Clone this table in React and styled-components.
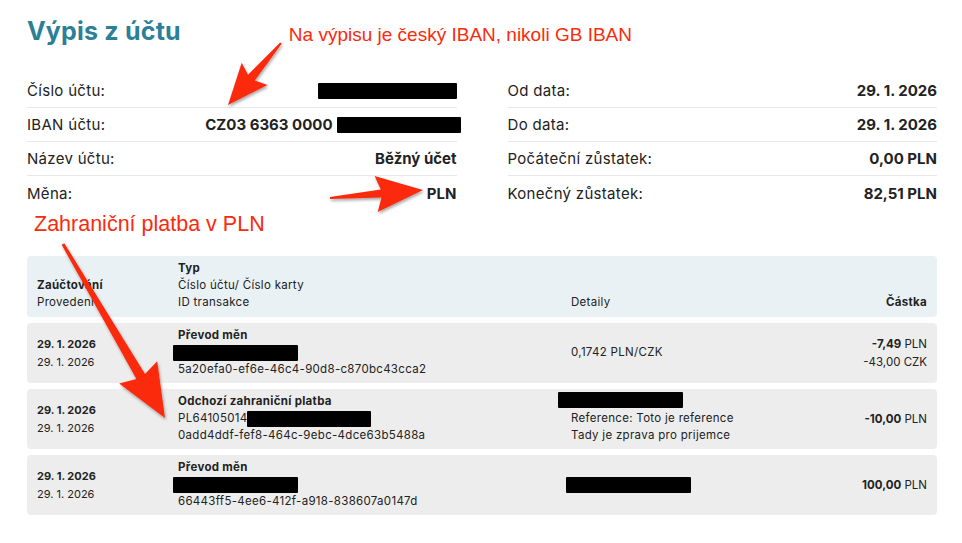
import React from "react";
import styled, { createGlobalStyle } from "styled-components";

const GlobalStyle = createGlobalStyle`
  html, body {
    margin: 0;
    background: #ffffff;
  }
  body {
    font-family: Inter, "Noto Sans", sans-serif;
    color: #1f1f1f;
  }
  * { box-sizing: border-box; }
`;

const RED = "#fb2a0c";

// arrow polygon from tail to tip, tapering shaft + triangular head
function arrowPoints(x1, y1, x2, y2, headLen, headW, shaftW, tailW) {
  const dx = x2 - x1;
  const dy = y2 - y1;
  const len = Math.hypot(dx, dy);
  const ux = dx / len;
  const uy = dy / len;
  const nx = -uy;
  const ny = ux;
  const bx = x2 - ux * headLen;
  const by = y2 - uy * headLen;
  const wx = bx - ux * 5;
  const wy = by - uy * 5;
  const pts = [
    [x1 + (nx * tailW) / 2, y1 + (ny * tailW) / 2],
    [bx + (nx * shaftW) / 2, by + (ny * shaftW) / 2],
    [wx + (nx * headW) / 2, wy + (ny * headW) / 2],
    [x2, y2],
    [wx - (nx * headW) / 2, wy - (ny * headW) / 2],
    [bx - (nx * shaftW) / 2, by - (ny * shaftW) / 2],
    [x1 - (nx * tailW) / 2, y1 - (ny * tailW) / 2],
  ];
  return pts.map((p) => p[0].toFixed(1) + "," + p[1].toFixed(1)).join(" ");
}

const arrows = [
  [281, 43, 228, 105, 36, 34, 9, 2],
  [330, 198, 423, 190, 42, 36, 8, 2],
  [63, 244, 165, 418, 48, 44, 10, 3],
];

function infoRows() {
  return {
    left: [
      { label: "Číslo účtu:", value: <Redact $w={139} /> },
      {
        label: "IBAN účtu:",
        value: (
          <>
            CZ03 6363 0000 <Redact $w={124} $overflow />
          </>
        ),
      },
      { label: "Název účtu:", value: "Běžný účet" },
      { label: "Měna:", value: "PLN" },
    ],
    right: [
      { label: "Od data:", value: "29. 1. 2026" },
      { label: "Do data:", value: "29. 1. 2026" },
      { label: "Počáteční zůstatek:", value: "0,00 PLN" },
      { label: "Konečný zůstatek:", value: "82,51 PLN" },
    ],
  };
}

export default function App() {
  const info = infoRows();
  return (
    <Page>
      <GlobalStyle />
      <TitleRow>
        <Title>Výpis z účtu</Title>
        <Note>Na výpisu je český IBAN, nikoli GB IBAN</Note>
      </TitleRow>

      <InfoGrid>
        {["left", "right"].map((side) => (
          <InfoColumn key={side}>
            {info[side].map((r) => (
              <InfoRow key={r.label}>
                <InfoLabel>{r.label}</InfoLabel>
                <InfoValue>{r.value}</InfoValue>
              </InfoRow>
            ))}
          </InfoColumn>
        ))}
      </InfoGrid>

      <SubNote>Zahraniční platba v PLN</SubNote>

      <Table>
        <HeadRow>
          <Cell $bottom>
            <b>Zaúčtování</b>
            <div>Provedení</div>
          </Cell>
          <Cell>
            <b>Typ</b>
            <div>Číslo účtu/ Číslo karty</div>
            <div>ID transakce</div>
          </Cell>
          <Cell $bottom>Detaily</Cell>
          <Cell $bottom $right>
            <b>Částka</b>
          </Cell>
        </HeadRow>

        <Row>
          <DateCell>
            <b>29. 1. 2026</b>
            <div>29. 1. 2026</div>
          </DateCell>
          <Cell>
            <b>Převod měn</b>
            <Line>
              <Redact $w={125} $shift={-5} />
            </Line>
            <div>5a20efa0-ef6e-46c4-90d8-c870bc43cca2</div>
          </Cell>
          <DetailCell>0,1742 PLN/CZK</DetailCell>
          <AmountCell>
            <div>
              <b>-7,49</b> PLN
            </div>
            <div>-43,00 CZK</div>
          </AmountCell>
        </Row>

        <Row>
          <DateCell>
            <b>29. 1. 2026</b>
            <div>29. 1. 2026</div>
          </DateCell>
          <Cell>
            <b>Odchozí zahraniční platba</b>
            <Line>
              PL64105014
              <Redact $w={124} />
            </Line>
            <div>0add4ddf-fef8-464c-9ebc-4dce63b5488a</div>
          </Cell>
          <DetailCell>
            <Line>
              <Redact $w={125} $shift={-13} $lift />
            </Line>
            <div>Reference: Toto je reference</div>
            <div>Tady je zprava pro prijemce</div>
          </DetailCell>
          <AmountCell>
            <div>
              <b>-10,00</b> PLN
            </div>
          </AmountCell>
        </Row>

        <Row>
          <DateCell>
            <b>29. 1. 2026</b>
            <div>29. 1. 2026</div>
          </DateCell>
          <Cell>
            <b>Převod měn</b>
            <Line>
              <Redact $w={125} $shift={-5} />
            </Line>
            <div>66443ff5-4ee6-412f-a918-838607a0147d</div>
          </Cell>
          <DetailCell>
            <Redact $w={125} $shift={-5} />
          </DetailCell>
          <AmountCell>
            <div>
              <b>100,00</b> PLN
            </div>
          </AmountCell>
        </Row>
      </Table>

      <Overlay width="962" height="543" viewBox="0 0 962 543">
        <defs>
          <filter id="shadow" x="-20%" y="-20%" width="140%" height="140%">
            <feDropShadow dx="1" dy="2" stdDeviation="1.6" floodColor="#000" floodOpacity="0.35" />
          </filter>
        </defs>
        {arrows.map((a, i) => (
          <polygon key={i} points={arrowPoints(...a)} fill={RED} filter="url(#shadow)" />
        ))}
      </Overlay>
    </Page>
  );
}

const Page = styled.div`
  position: relative;
  width: 962px;
  height: 543px;
  overflow: hidden;
  padding: 14px 25px 0 27px;
`;

const TitleRow = styled.div`
  display: flex;
  align-items: center;
  height: 34px;
`;

const Title = styled.h1`
  margin: 0;
  font-size: 25px;
  font-weight: 700;
  letter-spacing: 0.2px;
  color: #2b7f97;
`;

const Note = styled.span`
  margin-left: 108px;
  margin-top: 8px;
  font-family: "Liberation Sans", Arial, sans-serif;
  font-size: 19px;
  color: ${RED};
`;

const InfoGrid = styled.div`
  display: grid;
  grid-template-columns: 1fr 1fr;
  column-gap: 51px;
  margin-top: 26px;
`;

const InfoColumn = styled.div`
  display: flex;
  flex-direction: column;
`;

const InfoRow = styled.div`
  display: flex;
  align-items: center;
  justify-content: space-between;
  height: 34px;
  font-size: 15px;
  color: #222;
  border-bottom: 1px solid #e8e8e8;
  &:last-child {
    border-bottom: none;
  }
`;

const InfoLabel = styled.span`
  letter-spacing: 0.3px;
`;

const InfoValue = styled.span`
  display: flex;
  align-items: center;
  gap: 4px;
  font-weight: 700;
`;

const Redact = styled.span`
  display: inline-block;
  width: ${(p) => p.$w}px;
  height: 16px;
  background: #000;
  border-radius: 1px;
  vertical-align: middle;
  margin-left: ${(p) => p.$shift || 0}px;
  margin-right: ${(p) => (p.$overflow ? -4 : 0)}px;
  position: relative;
  top: ${(p) => (p.$lift ? -2 : 0)}px;
`;

const SubNote = styled.div`
  margin-left: 7px;
  height: 28px;
  line-height: 28px;
  font-family: "Liberation Sans", Arial, sans-serif;
  font-size: 21.5px;
  color: ${RED};
`;

const Table = styled.div`
  display: flex;
  flex-direction: column;
  gap: 6px;
  margin-top: 18px;
  font-size: 11.5px;
  letter-spacing: 0.3px;
  color: #222;
`;

const gridCols = `
  display: grid;
  grid-template-columns: 141px 393px 254px 1fr;
  border-radius: 4px;
  line-height: 17px;
`;

const HeadRow = styled.div`
  ${gridCols}
  background: #e9f1f4;
  padding: 4px 10px 6px;
  b { font-weight: 700; }
`;

const Row = styled.div`
  ${gridCols}
  background: #ededed;
  padding: 4px 10px 5px;
  height: 60px;
  b { font-weight: 700; }
`;

const Cell = styled.div`
  display: flex;
  flex-direction: column;
  align-self: ${(p) => (p.$bottom ? "end" : "start")};
  text-align: ${(p) => (p.$right ? "right" : "left")};
  white-space: nowrap;
`;

const Line = styled.div`
  display: flex;
  align-items: center;
  height: 17px;
`;

const DateCell = styled.div`
  align-self: center;
  font-size: 11px;
  letter-spacing: 0;
  line-height: 18px;
  display: flex;
  flex-direction: column;
`;

const DetailCell = styled.div`
  align-self: center;
  display: flex;
  flex-direction: column;
  white-space: nowrap;
`;

const AmountCell = styled.div`
  align-self: center;
  text-align: right;
  letter-spacing: 0;
  line-height: 18px;
  white-space: nowrap;
`;

const Overlay = styled.svg`
  position: absolute;
  top: 0;
  left: 0;
  pointer-events: none;
`;
